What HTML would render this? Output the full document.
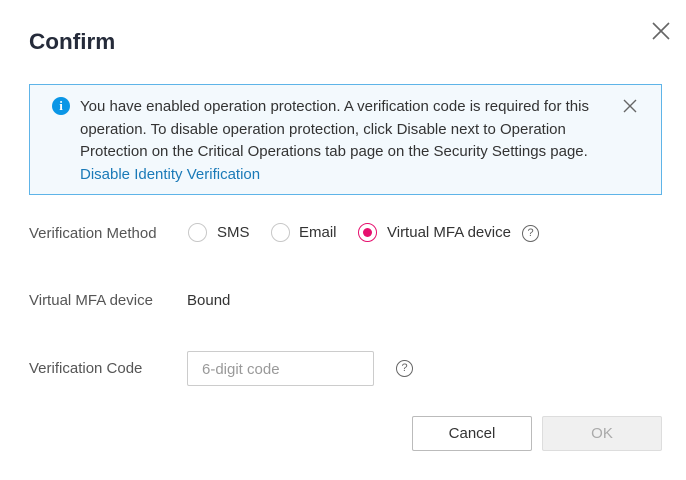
<!DOCTYPE html>
<html><head><style>
body{margin:0;width:686px;height:480px;background:#fff;font-family:"Liberation Sans",sans-serif;color:#333;position:relative;overflow:hidden}
.a{position:absolute;white-space:nowrap}
.t{font-size:15px}
.r{position:absolute;width:19px;height:19px;border:1px solid #c8c8c8;border-radius:50%;box-sizing:border-box}
.q{position:absolute;width:17px;height:17px;border:1.3px solid #666;border-radius:50%;box-sizing:border-box;font-size:11px;color:#666;text-align:center;line-height:15px}
.b{position:absolute;box-sizing:border-box;font-size:15px;text-align:center}
</style></head><body>
<div class="a" style="left:29px;top:29px;font-size:22.5px;font-weight:bold;color:#252b3a">Confirm</div>
<svg class="a" style="left:651px;top:21px" width="20" height="20"><path d="M2 2L18 18M18 2L2 18" stroke="#666" stroke-width="1.6"/></svg>
<div class="a" style="left:29px;top:84px;width:633px;height:111px;box-sizing:border-box;border:1px solid #5eb4e8;background:#f3f9fd"></div>
<div class="a" style="left:52px;top:97px;width:18px;height:18px;border-radius:50%;background:#0a96e6;color:#fff;font-size:13px;font-weight:bold;text-align:center;line-height:18px;font-family:'Liberation Serif',serif">i</div>
<div class="a t" style="left:80px;top:96px;line-height:22.5px;color:#333">You have enabled operation protection. A verification code is required for this<br>operation. To disable operation protection, click Disable next to Operation<br>Protection on the Critical Operations tab page on the Security Settings page.<br><span style="color:#1a7ab8">Disable Identity Verification</span></div>
<svg class="a" style="left:623px;top:99px" width="14" height="14"><path d="M1 1L13 13M13 1L1 13" stroke="#666" stroke-width="1.4"/></svg>
<div class="a t" style="left:29px;top:225px;color:#555">Verification Method</div>
<div class="r" style="left:188px;top:223px"></div>
<div class="a t" style="left:217px;top:224px">SMS</div>
<div class="r" style="left:271px;top:223px"></div>
<div class="a t" style="left:299px;top:224px">Email</div>
<div class="r" style="left:358px;top:223px;border-color:#e6106e"><div style="position:absolute;left:4px;top:4px;width:9px;height:9px;border-radius:50%;background:#e6106e"></div></div>
<div class="a t" style="left:387px;top:224px">Virtual MFA device</div>
<div class="q" style="left:522px;top:225px">?</div>
<div class="a t" style="left:29px;top:292px;color:#555">Virtual MFA device</div>
<div class="a t" style="left:187px;top:292px">Bound</div>
<div class="a t" style="left:29px;top:360px;color:#555">Verification Code</div>
<div class="a" style="left:187px;top:351px;width:187px;height:35px;box-sizing:border-box;border:1px solid #ccc;border-radius:2px"></div>
<div class="a t" style="left:202px;top:361px;color:#999">6-digit code</div>
<div class="q" style="left:396px;top:360px">?</div>
<div class="b" style="left:412px;top:416px;width:120px;height:35px;border:1px solid #bbb;border-radius:2px;color:#333;line-height:34px">Cancel</div>
<div class="b" style="left:542px;top:416px;width:120px;height:35px;border:1px solid #ddd;border-radius:2px;background:#f0f0f0;color:#aaa;line-height:34px">OK</div>
</body></html>
